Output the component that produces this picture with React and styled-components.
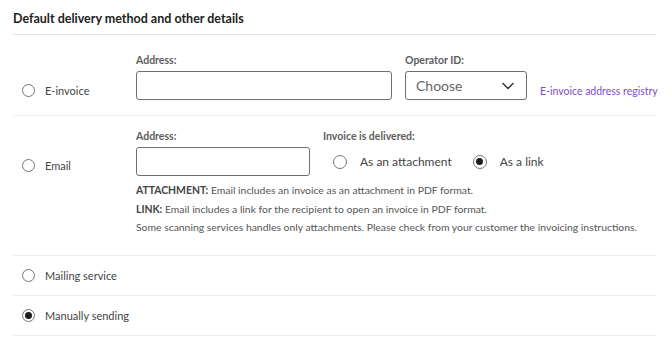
import React from "react"
import styled, { createGlobalStyle } from "styled-components"

const GlobalStyle = createGlobalStyle`
  body {
    margin: 0;
    background: #fff;
    font-family: Lato, "Open Sans", sans-serif;
    color: #333;
  }
`

const Page = styled.section`
  width: 643px;
  padding: 0 0 0 13px;
`

const Title = styled.h2`
  margin: 0;
  height: 35px;
  line-height: 38px;
  font-size: 12.5px;
  font-weight: 700;
  color: #222;
  border-bottom: 1px solid #e3e3e3;
  box-sizing: border-box;
`

const Row = styled.div`
  display: flex;
  min-height: ${(p) => p.$height}px;
  box-sizing: border-box;
  border-bottom: 1px solid #ececec;
  align-items: ${(p) => (p.$center ? "center" : "flex-start")};
`

const Choice = styled.label`
  width: 123px;
  flex: none;
  display: flex;
  align-items: center;
  gap: 10px;
  padding-left: 9px;
  box-sizing: border-box;
  margin-top: ${(p) => p.$offset || 0}px;
  font-size: 11px;
  color: #444;
`

const Radio = styled.span`
  width: ${(p) => p.$size}px;
  height: ${(p) => p.$size}px;
  flex: none;
  border-radius: 50%;
  border: 1px solid #777;
  box-sizing: border-box;
  display: flex;
  align-items: center;
  justify-content: center;
  &::after {
    content: "";
    width: ${(p) => (p.$checked ? Math.round(p.$size / 2) : 0)}px;
    height: ${(p) => (p.$checked ? Math.round(p.$size / 2) : 0)}px;
    border-radius: 50%;
    background: #1e1e1e;
  }
`

const Fields = styled.div`
  display: flex;
  align-items: flex-end;
  gap: 13px;
  padding-top: ${(p) => p.$top}px;
`

const Field = styled.div`
  display: flex;
  flex-direction: column;
  gap: 4px;
`

const FieldLabel = styled.span`
  font-size: 10.5px;
  font-weight: 700;
  color: #5e5e5e;
  line-height: 14px;
`

const Input = styled.div`
  width: ${(p) => p.$width}px;
  height: 29px;
  box-sizing: border-box;
  border: 1px solid #6f6f6f;
  border-radius: 3px;
  background: #fff;
`

const Select = styled.div`
  width: 122px;
  height: 29px;
  box-sizing: border-box;
  border: 1px solid #6f6f6f;
  border-radius: 3px;
  display: flex;
  align-items: center;
  justify-content: space-between;
  padding: 0 12px 0 10px;
  font-size: 14px;
  color: #666;
`

const RegistryLink = styled.a`
  font-size: 10.5px;
  color: #7b4fc8;
  text-decoration: none;
  white-space: nowrap;
  margin-bottom: 3px;
`

const EmailBody = styled.div`
  display: flex;
  flex-direction: column;
  padding-top: 13px;
`

const RadioGroup = styled.div`
  display: flex;
  align-items: center;
  height: 29px;
  padding-left: 10px;
  gap: 13px;
  font-size: 12px;
  color: #444;
`

const Option = styled.span`
  margin-right: 8px;
`

const Notes = styled.div`
  margin-top: 5px;
  font-size: 10.4px;
  color: #555;
  line-height: 18.5px;
  white-space: nowrap;
  b {
    font-weight: 700;
    color: #444;
  }
`

const Chevron = () => (
  <svg width="12" height="8" viewBox="0 0 12 8" fill="none">
    <path d="M1 1.5l5 5 5-5" stroke="#333" strokeWidth="1.5" strokeLinecap="round" strokeLinejoin="round" />
  </svg>
)

export default function App() {
  return (
    <>
      <GlobalStyle />
      <Page>
        <Title>Default delivery method and other details</Title>

        <Row $height={81}>
          <Choice $offset={49}>
            <Radio $size={13} />
            E-invoice
          </Choice>
          <Fields $top={18}>
            <Field>
              <FieldLabel>Address:</FieldLabel>
              <Input $width={256} />
            </Field>
            <Field>
              <FieldLabel>Operator ID:</FieldLabel>
              <Select>
                Choose
                <Chevron />
              </Select>
            </Field>
            <RegistryLink href="#">E-invoice address registry</RegistryLink>
          </Fields>
        </Row>

        <Row $height={140}>
          <Choice $offset={43}>
            <Radio $size={13} />
            Email
          </Choice>
          <EmailBody>
            <Fields $top={0}>
              <Field>
                <FieldLabel>Address:</FieldLabel>
                <Input $width={174} />
              </Field>
              <Field>
                <FieldLabel>Invoice is delivered:</FieldLabel>
                <RadioGroup>
                  <Radio $size={14} />
                  <Option>As an attachment</Option>
                  <Radio $size={14} $checked />
                  <Option>As a link</Option>
                </RadioGroup>
              </Field>
            </Fields>
            <Notes>
              <div>
                <b>ATTACHMENT:</b> Email includes an invoice as an attachment in PDF format.
              </div>
              <div>
                <b>LINK:</b> Email includes a link for the recipient to open an invoice in PDF format.
              </div>
              <div>
                Some scanning services handles only attachments. Please check from your customer the invoicing instructions.
              </div>
            </Notes>
          </EmailBody>
        </Row>

        <Row $height={40} $center>
          <Choice>
            <Radio $size={13} />
            Mailing service
          </Choice>
        </Row>

        <Row $height={40} $center>
          <Choice>
            <Radio $size={13} $checked />
            Manually sending
          </Choice>
        </Row>
      </Page>
    </>
  )
}
